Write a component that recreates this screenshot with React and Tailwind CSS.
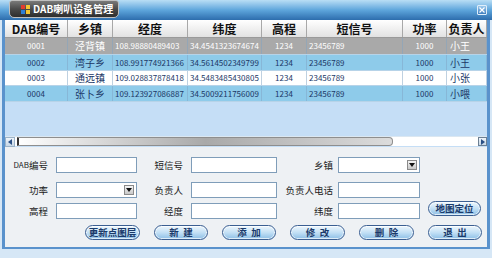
import React from 'react';

const cols = [63, 45, 75, 74, 45, 96, 44, 40];
const aligns = ['justify-center', 'justify-center', 'justify-start pl-[2px]', 'justify-start pl-[2px]', 'justify-center', 'justify-start pl-[2px]', 'justify-center', 'justify-start pl-[3px]'];
const headers = ['DAB编号', '乡镇', '经度', '纬度', '高程', '短信号', '功率', '负责人'];
const rows = [
  { bg: 'bg-[#a9a9a9]', text: 'text-white', h: 'h-[17px]', d: ['0001', '泾背镇', '108.98880489403', '34.4541323674674', '1234', '23456789', '1000', '小王'] },
  { bg: 'bg-[#8ecbea]', text: 'text-[#1b3766]', h: 'h-[16px]', d: ['0002', '湾子乡', '108.991774921366', '34.5614502349799', '1234', '23456789', '1000', '小王'] },
  { bg: 'bg-white', text: 'text-[#1b3766]', h: 'h-[15px]', d: ['0003', '通远镇', '109.028837878418', '34.5483485430805', '1234', '23456789', '1000', '小张'] },
  { bg: 'bg-[#8ecbea]', text: 'text-[#1b3766]', h: 'h-[16px]', d: ['0004', '张卜乡', '109.123927086887', '34.5009211756009', '1234', '23456789', '1000', '小喂'] },
];

const font = { fontFamily: '"Noto Sans CJK SC", "Liberation Sans", sans-serif' };

function Input({ w, select }) {
  return (
    <div className="h-[16px] bg-white border border-[#7f9db9] flex items-center justify-end pr-[2px]" style={{ width: w }}>
      {select && (
        <div className="w-[10px] h-[10px] bg-gradient-to-b from-[#f4f4f4] to-[#c8c8c8] border border-[#8a8a8a] flex items-center justify-center">
          <svg width="6" height="4" viewBox="0 0 6 4"><path d="M0 0H6L3 4Z" fill="#111" /></svg>
        </div>
      )}
    </div>
  );
}

function Btn({ children, w }) {
  return (
    <div
      className="h-[15px] rounded-full border border-[#3b5f92] bg-gradient-to-b from-[#eef7fd] via-[#c3e0f5] to-[#8dbfe6] flex items-center justify-center text-[9.5px] font-bold text-[#1b3a6a] shadow-[inset_0_0_0_1px_rgba(255,255,255,0.7)] whitespace-pre"
      style={{ width: w }}
    >
      {children}
    </div>
  );
}

function Label({ w, children }) {
  return (
    <div className="flex justify-end items-center text-[9.5px] text-[#222] whitespace-nowrap" style={{ width: w }}>
      {children}
    </div>
  );
}

export default function App() {
  return (
    <div className="w-[492px] h-[258px] overflow-hidden bg-[#d6e7f6] flex flex-col" style={font}>
      {/* title bar */}
      <div className="h-[20px] shrink-0 bg-gradient-to-b from-[#b9def5] via-[#5ea6dc] to-[#2d6dad] flex items-start relative">
        <div className="ml-[9px] w-[110px] h-[18px] rounded-b-[5px] rounded-t-[3px] bg-gradient-to-b from-[#7a7a7a] via-[#4a4a4a] to-[#2e2e2e] border border-[#bfbfbf] flex items-center pl-[11px] gap-[3px]">
          <div className="w-[9px] h-[9px] grid grid-cols-2 gap-[1px]">
            <div className="bg-[#e23b2e]" />
            <div className="bg-[#f4c430]" />
            <div className="bg-[#2f7fd6]" />
            <div className="bg-[#f4c430]" />
          </div>
          <span className="text-white font-bold text-[10px] leading-none">DAB喇叭设备管理</span>
        </div>
        <div className="absolute right-[5px] top-[5px] w-[10px] h-[10px] border border-[#dfeefa] bg-gradient-to-b from-[#9cc9ec] to-[#3f7fbf] rounded-[1px] flex items-center justify-center">
          <svg width="6" height="6" viewBox="0 0 6 6"><path d="M0.5 0.5L5.5 5.5M5.5 0.5L0.5 5.5" stroke="#fff" strokeWidth="1.2" /></svg>
        </div>
      </div>

      {/* body */}
      <div className="h-[127px] shrink-0 flex flex-col mx-[2px] border-l-[3px] border-r-[3px] border-[#5a92cc] bg-[#c5def6]">
        <div className="flex h-[18px] shrink-0 bg-gradient-to-b from-white to-[#e2e2e2] border-b border-[#9a9a9a]">
          {headers.map((h, i) => (
            <div key={i} className="flex items-center justify-center border-r border-[#a8a8a8] text-[12px] font-bold text-[#111] leading-none" style={{ width: cols[i] }}>
              {h}
            </div>
          ))}
        </div>
        {rows.map((r, ri) => (
          <div key={ri} className={`flex shrink-0 ${r.h} ${r.bg} ${r.text} border-b border-[#b7d3e8]`}>
            {r.d.map((c, i) => (
              <div key={i} className={`flex items-center ${aligns[i]} border-r border-[#7fa3c4]/50 overflow-hidden whitespace-nowrap ${i === 1 || i === 7 ? 'text-[10px]' : 'text-[8px]'} leading-none`} style={{ width: cols[i] }}>
                {c}
              </div>
            ))}
          </div>
        ))}
        <div className="flex-1" />
        {/* scrollbar */}
        <div className="h-[10px] shrink-0 flex items-center bg-white border-t border-[#dbe7f1] mb-[1px]">
          <div className="w-[10px] h-[10px] bg-gradient-to-b from-[#eef4fa] to-[#c7d7e6] border border-[#9bb3c9] flex items-center justify-center">
            <svg width="4" height="6" viewBox="0 0 4 6"><path d="M4 0V6L0 3Z" fill="#2a4f85" /></svg>
          </div>
          <div className="ml-[2px] w-[376px] h-[9px] rounded-r-[4px] border border-[#8e8e8e] border-l-[2px] border-l-[#333] bg-gradient-to-r from-white via-[#a9a9a9] to-[#dcdcdc]" />
          <div className="flex-1" />
          <div className="w-[9px] h-[9px] bg-gradient-to-b from-[#eef4fa] to-[#c7d7e6] border border-[#6c7f93] flex items-center justify-center">
            <svg width="4" height="6" viewBox="0 0 4 6"><path d="M0 0V6L4 3Z" fill="#2a4f85" /></svg>
          </div>
        </div>
      </div>

      {/* form */}
      <div className="h-[102px] shrink-0 mx-[2px] border-l-[3px] border-r-[3px] border-b-[2px] border-[#5a92cc] bg-[#eef1f4] flex flex-col pt-[10px]">
        <div className="flex items-center h-[16px]">
          <Label w={43}><span className="text-[8px]">DAB</span>编号</Label>
          <div className="w-[8px]" />
          <Input w={81} />
          <Label w={46}>短信号</Label>
          <div className="w-[8px]" />
          <Input w={86} />
          <Label w={56}>乡镇</Label>
          <div className="w-[5px]" />
          <Input w={82} select />
        </div>
        <div className="flex items-center h-[16px] mt-[9px]">
          <Label w={43}>功率</Label>
          <div className="w-[8px]" />
          <Input w={81} select />
          <Label w={46}>负责人</Label>
          <div className="w-[8px]" />
          <Input w={86} />
          <Label w={56}>负责人电话</Label>
          <div className="w-[5px]" />
          <Input w={82} />
        </div>
        <div className="flex items-center h-[16px] mt-[5px]">
          <Label w={43}>高程</Label>
          <div className="w-[8px]" />
          <Input w={81} />
          <Label w={46}>经度</Label>
          <div className="w-[8px]" />
          <Input w={86} />
          <Label w={56}>纬度</Label>
          <div className="w-[5px]" />
          <Input w={82} />
          <div className="w-[8px]" />
          <div className="-mt-[5px]"><Btn w={53}>地图定位</Btn></div>
        </div>
        <div className="flex items-center h-[15px] mt-[6px] pl-[80px] gap-[14px]">
          <Btn w={55}>更新点图层</Btn>
          <Btn w={54}>{'新  建'}</Btn>
          <Btn w={54}>{'添  加'}</Btn>
          <Btn w={55}>{'修  改'}</Btn>
          <Btn w={55}>{'删  除'}</Btn>
          <Btn w={54}>{'退  出'}</Btn>
        </div>
      </div>
      <div className="flex-1 bg-[#d6e7f6]" />
    </div>
  );
}
